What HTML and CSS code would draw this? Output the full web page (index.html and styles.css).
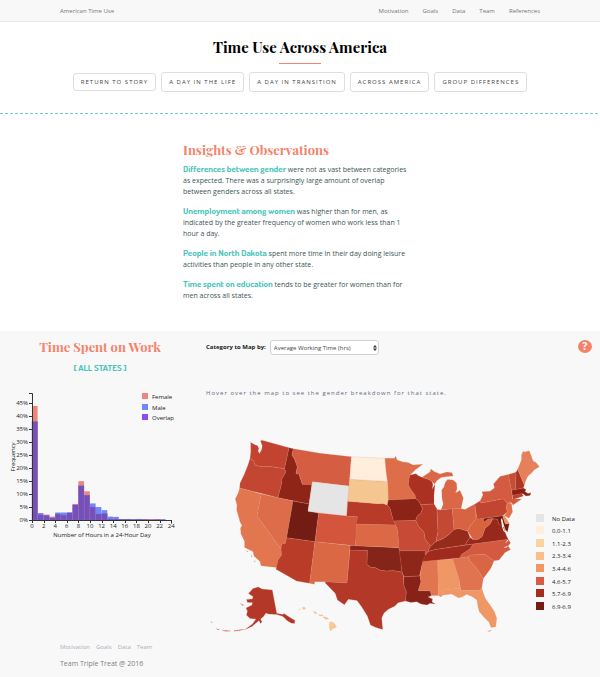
FILE: index.html
```html
<!DOCTYPE html>
<html lang="en">
<head>
<meta charset="utf-8">
<title>American Time Use</title>
<link rel="stylesheet" href="styles.css">
</head>
<body>
<header class="topbar">
  <a class="brand" href="#">American Time Use</a>
  <nav class="topnav">
    <a href="#">Motivation</a><a href="#">Goals</a><a href="#">Data</a><a href="#">Team</a><a href="#">References</a>
  </nav>
</header>

<section class="hero">
  <h1>Time Use Across America</h1>
  <div class="rule"></div>
  <nav class="tabs">
    <a class="tab tab-back" href="#">Return to story</a>
    <a class="tab" href="#">A day in the life</a>
    <a class="tab" href="#">A day in transition</a>
    <a class="tab" href="#">Across America</a>
    <a class="tab" href="#">Group differences</a>
  </nav>
</section>
<div class="dashes"></div>

<section class="insights">
  <h2>Insights &amp; Observations</h2>
  <p><strong>Differences between gender</strong> were not as vast between categories as expected. There was a surprisingly large amount of overlap between genders across all states.</p>
  <p><strong>Unemployment among women</strong> was higher than for men, as indicated by the greater frequency of women who work less than 1 hour a day.</p>
  <p><strong>People in North Dakota</strong> spent more time in their day doing leisure activities than people in any other state.</p>
  <p><strong>Time spent on education</strong> tends to be greater for women than for men across all states.</p>
</section>

<main class="explore">
  <section class="histogram">
    <h2>Time Spent on Work</h2>
    <h3>[ ALL STATES ]</h3>
    <svg class="hist" viewBox="0 380 200 165" role="img" aria-label="Hours of work by gender">
      <g id="bars"></g>
      <g id="axes"></g>
      <text x="102" y="537" text-anchor="middle">Number of Hours in a 24-Hour Day</text>
      <text transform="translate(15 457) rotate(-90)" text-anchor="middle">Frequency</text>
      <rect x="142" y="393" width="6" height="6" fill="#f0857c"/><text x="152" y="399">Female</text>
      <rect x="142" y="404" width="6" height="6" fill="#7088fb"/><text x="152" y="410">Male</text>
      <rect x="142" y="414" width="6" height="6" fill="#8c4df0"/><text x="152" y="420">Overlap</text>
    </svg>
  </section>

  <section class="mapping">
    <div class="controls">
      <label for="category">Category to Map by:</label>
      <div class="picker">
        <select id="category"><option>Average Working Time (hrs)</option></select>
        <svg class="arrows" viewBox="0 0 4 6" aria-hidden="true"><path d="M0 2.5 2 0l2 2.5zM0 3.5h4L2 6z" fill="#333"/></svg>
      </div>
      <button class="help" type="button" aria-label="Help">?</button>
    </div>
    <p class="hint">Hover over the map to see the gender breakdown for that state.</p>
    <svg class="map" viewBox="200 430 400 208" role="img" aria-label="Average working time by state">
      <g class="states">
        <path fill="#c24430" d="M250.700 442.300 254.700 444.700 258 445.700 259.300 447 258 451 259.500 453.500 261.500 450 262.300 446 260.500 441 262 440.300 289 447.700 284.500 468.700 270 466.500 262 466.700 255 465.300 253.500 460.500 250 458.500 250.800 452z"/>
        <path fill="#c24631" d="M250 458.500 253.500 460.500 255 465.300 262 466.700 270 466.500 284.500 468.700 286 471.700 281.300 480 282 482 278 497.700 239.700 488 240 483.300 244 475 248 465z"/>
        <path fill="#8e2517" d="M289 447.700 293.300 448.700 292 455 294.500 459 297.300 466.500 296 474 299 474 302.300 484.300 311.800 484.300 309 504 278 497.700 282 482 281.300 480 286 471.700 284.500 468.700z"/>
        <path fill="#d55d42" d="M293.300 448.700 320 453.300 351.300 456.700 349 486 312.500 481.700 311.800 484.300 302.300 484.300 299 474 296 474 297.300 466.500 294.500 459 292 455z"/>
        <path fill="#e2764e" d="M239.700 488 261.300 494 257 515.700 281 549 281.500 555 278 560 276.700 567.500 261 565.700 260 561.500 254 556 253 551.500 244.700 547.500 244.500 541 241 534 240.500 528 242 525.500 240 522 239 518 236.700 510 237 505 235.300 499 238.300 493z"/>
        <path fill="#dd6d4a" d="M261.300 494 293 501 286.600 537.800 285 544 282 543 281 549 257 515.700z"/>
        <path fill="#731c13" d="M293 501 309 504 308 511.300 318.700 513 315 541.700 286.600 537.800z"/>
        <path fill="#e5e5e5" d="M312.500 481.700 349 486 346.700 516 308 511.300z"/>
        <path fill="#d2553c" d="M318.700 513 346.700 516 357.500 516.700 355.500 545.700 315 541.700z"/>
        <path fill="#b93c28" d="M286.600 537.800 315 541.700 309.600 583.300 296.600 581 276 569.300 278 560 281.500 555 281 549 282 543 285 544z"/>
        <path fill="#da6845" d="M315 541.700 350.200 545.600 347 583 325.300 581.700 314.600 581.700 314.400 584.300 309.600 583.300z"/>
        <path fill="#b43827" d="M350 550 367.400 550.300 367 564.300 371 567.500 375 567.500 380 570 386.500 571 393 570.500 402 572 403.700 576.700 403.700 585 406.400 591.700 405.500 601 398 602.700 395 606 388.400 609.300 384 613 381.700 618 382.700 629.500 376 627.500 370.500 625 367.400 616 361.600 606.700 357 600.500 348.300 599.300 344.400 604.800 337.500 600 335.200 593.300 325.300 583 325.300 581.700 347 583z"/>
        <path fill="#852419" d="M350.200 545.600 399.200 547.700 400.800 560 402 572 393 570.500 386.500 571 380 570 375 567.500 371 567.500 367 564.300 367.400 550.300 350 550z"/>
        <path fill="#dc6846" d="M356.300 524 395.700 525 397.500 530 399.200 547.500 355.500 545.700z"/>
        <path fill="#b83a29" d="M347.700 501.300 378 503.700 383 503.500 387.300 505 390 508.300 392.700 518.300 395.700 525 356.300 524 357.500 516.700 346.700 516z"/>
        <path fill="#f6c691" d="M350 479.300 387.300 481.500 388 485 388.300 500 387.300 505 383 503.500 378 503.700 347.700 501.300z"/>
        <path fill="#feeedb" d="M351.300 456.700 385 458.300 386 470 387.300 481.500 350 479.300z"/>
        <path fill="#de6d4a" d="M385 458.300 394.700 458.300 395.700 456 397 460 403 462 408 462.500 413 465 422.700 464.300 415 470 410 475 409 479 408.300 485 410.500 489 415 495 415.700 498.700 388.300 500 388 485 386 470z"/>
        <path fill="#ab3222" d="M410 475 416 473.700 418.300 475.700 422 477.300 429 479.500 432 481.500 433 485 432 489 435 484.500 434 495 434 504 420.700 504.700 418.300 500.500 415.700 498.700 415 495 410.500 489 408.300 485 409 479z"/>
        <path fill="#8c2317" d="M388.300 500 415.700 498.700 418.300 500.500 420.700 504.700 422.500 508.500 421 513 417.300 516 415.700 520.500 393.500 521 390 508.300 387.300 505z"/>
        <path fill="#c64a35" d="M393.500 521 415.700 520.500 418.300 526 424 532 425 539 430.500 546 428 551.500 425 555 425 550.700 399.300 550.700 397.500 530 395.700 525z"/>
        <path fill="#8f261a" d="M399.300 550.700 425 550.700 425 555 427 553 425 559 422 565 419.500 576 404 576.700 402 572z"/>
        <path fill="#862217" d="M404 576.700 420 576 421 582 418.300 590.700 430.300 590.700 431.500 595.500 428 597 432.500 599 432 602 435.300 604 430 603.300 427 605 421 604 416.700 601.700 411 602.500 405.500 601 406.400 591.700 403.700 585z"/>
        <path fill="#e07550" d="M422.700 561.300 437.700 560 438.300 595.500 431.500 595.500 430.300 590.700 418.300 590.700 421 582 420 576 422 565z"/>
        <path fill="#ef9765" d="M437.700 560 452.700 559 459.300 580 460 588.300 442.300 590 443 595 441 597 438.300 595.500z"/>
        <path fill="#e07450" d="M452.700 559 468 556.700 470 561 476.700 568.300 483.300 578.500 481.700 588.300 479 590.500 460.700 590.300 459.300 580z"/>
        <path fill="#ef9866" d="M442.300 590 460 588.300 460.700 590.300 479 590.500 481.700 588.300 485 598 490 605 494.500 611.700 496.700 618.300 495.700 626.700 491 627.500 489 622 485 618.300 479.500 612 478 607 477 600 472 596.500 466.700 594.300 462 597 458.300 597.700 451.700 594 443 595z"/>
        <path fill="#da6544" d="M468 556.700 471 555 485 554.300 494 560.700 491 568 483.300 578.500 476.700 568.300 470 561z"/>
        <path fill="#d35a40" d="M473 544 508.300 539.300 510.500 543 508 546 510.500 549.500 505 552.500 499 560 494 560.700 485 554.300 471 555 468 556.700 459.500 558 462 554 470 549z"/>
        <path fill="#a02b1c" d="M428 551.500 435 549.500 473 544 470 549 462 554 459.500 558 422.700 561.500 425 556z"/>
        <path fill="#962a1b" d="M436 541.500 442 539 444 538 449 534.500 454 529.500 459 528.500 467.500 531 470 537.300 465 545 435 549.500 428 551.500 430.500 546z"/>
        <path fill="#97281b" d="M465 545 470 537.300 473 539.500 478 539.300 482 536.700 485 528.300 490 524 493 518.500 497.500 519.500 499 524 504 527.500 505 532 507 537 508.300 539.300 473 544z"/>
        <path fill="#d9623f" d="M475.500 510 477.300 519.300 483.300 518.300 484 522 488 519 493 518.500 490 524 485 528.300 482 536.700 478 539.300 473 539.500 467.500 531 470 526 475 520z"/>
        <path fill="#b63a28" d="M420.700 504.700 434 504 437 509 438 531.700 436 541.500 430.500 546 425 539 424 532 418.300 526 415.700 520.500 417.300 516 421 513 422.500 508.500z"/>
        <path fill="#c44934" d="M437 509.500 441 510 452.300 508.700 454 529.500 449 534.500 444 538 436 541.500 438 531.700z"/>
        <path fill="#d86343" d="M452.300 508.700 461 508.700 465 509.500 475 504 475.500 515 475 520 470 526 467.500 531 459 528.500 454 529.500z"/>
        <path fill="#da6746" d="M441 510 443.300 504 442 498 441.700 490 444 487 445 483 447.500 479.500 453 480 456.500 483 457 488.500 455.500 493 460 490.500 463.300 498 461 508.700 452.300 508.700zM422 477.300 430 472 431 469 434 471.500 440 474 447 472 452 472.700 453 476 447 476.500 441 477.500 437 480.500 434.500 484 432 481.500 429 479.500z"/>
        <path fill="#c24532" d="M475 504 480 501 481 503 503.300 498.700 507.300 503 506 508 507.500 512 502.700 515.700 477.300 519.300 475.500 510z"/>
        <path fill="#d45b40" d="M480 501 483 495 482 491.700 490 491.300 494.500 488 493.500 484 500 476.500 508.300 474.500 511.500 490 512.500 499 521.500 499 513 505 511.500 502.500 507.300 503 503.300 498.700 481 503z"/>
        <path fill="#c54e36" d="M508.300 474.500 516 472.300 515.500 489.500 511.500 490.300z"/>
        <path fill="#ae3425" d="M516 472.300 517.700 469.300 524.300 485 523.300 488 515.500 489.500z"/>
        <path fill="#e5805a" d="M517.700 469.300 521.500 460 521.500 455 523 451.500 525 452 529 450.700 531 455 533 461 536 462.500 539.300 466.700 534 470 532 472.500 528 476 526 480 524.300 485z"/>
        <path fill="#8c2014" d="M511.700 490.300 523.300 488 526 489.500 525 491.500 528 493.500 531 492.700 530 495.500 526 496 523 493.700 512.300 495.500z"/>
        <path fill="#ba3f2d" d="M512.300 495.500 521.500 493.500 523.500 496 513 499.500z"/>
        <path fill="#de7049" d="M507.300 503 511.500 503.500 512.500 512 509 518.300 504.500 515.500 507.500 512 506 508z"/>
        <path fill="#751b12" d="M483.300 518.500 502.700 515.700 505.300 524 509.300 523.500 507.500 532 505.500 530 503 523 502 518 501 520 502 526.500 499 524 497.500 519.500 493 518.500 488 519 484 522z"/>
        <path fill="#f0975a" d="M502.700 515.700 504.500 515.500 509.300 523.500 505.300 524z"/>
        <path fill="#b43827" d="M248.500 593.500 253 588.500 258.300 587 262 589 272.300 590 276.700 613.300 283 614.500 284 613.500 290 617.500 295 620.500 294.500 623.500 291 623 287 620.500 283 616.500 277 614.500 268.300 614 266 613 263.500 616.500 260.500 619 262 622 260.500 623.500 259 620.500 256 623 252 626.500 245 629.500 252.500 624 256 619 250 618.500 246.500 615 247.500 611 246 608 252 605 252.500 602.500 247.500 602.500 246.500 599.500 252.500 599 253 596.500zM240.500 603.500 243.500 605 243 605.700zM245 629.500 239 630.600 234 631.300 234 630.700 240 629.700zM231 631 226 631.300 222 630.700 226 630.500zM219 630 216 628.700 219 629.300zM211 621.500l1.500 1h-1z"/>
        <path fill="#f9ca92" d="M302 608l2-1 1.500 1.300-1.500 1.500zM299 609.500l1-.8v1.300zM313.500 611.500l2 .3 1.300 2-2-.4zM319 614.800l4 .3-.5.8-3.500-.3zM323 617l2.500 0 3 1.500-2.500 1zM329.500 622.500l2.500-.8 2.500 2 2 3.300-3.500 1.500-2.500 2.400-1-3.500z"/>
      </g>
      <path class="water" d="M501.500 519.500 503 524 502.500 527 504.500 532M258 445l1 3M508 540l-2 2.500M507.500 546.500l-3 1"/>
      <path fill="#ef9866" d="M487 631.500 492 629.500 490 631.500z"/>
      <path fill="#e2764e" d="M245 550.500l3 .5v.7zM251 555l1.500 2-1.500-.5zM254 560l2 2-1.500-.4z"/>
      <g class="legend">
        <rect x="536" y="514" width="8" height="8" fill="#e5e5e5"/><text x="552" y="521">No Data</text>
        <rect x="536" y="526" width="8" height="8" fill="#feeedb"/><text x="552" y="533">0.0-1.1</text>
        <rect x="536" y="539" width="8" height="8" fill="#fbd3a0"/><text x="552" y="546">1.1-2.3</text>
        <rect x="536" y="552" width="8" height="8" fill="#f9be8a"/><text x="552" y="558">2.3-3.4</text>
        <rect x="536" y="564" width="8" height="8" fill="#f29664"/><text x="552" y="571">3.4-4.6</text>
        <rect x="536" y="577" width="8" height="8" fill="#d85c43"/><text x="552" y="584">4.6-5.7</text>
        <rect x="536" y="589" width="8" height="8" fill="#a52d1e"/><text x="552" y="596">5.7-6.9</text>
        <rect x="536" y="602" width="8" height="8" fill="#751b12"/><text x="552" y="609">6.9-6.9</text>
      </g>
    </svg>
  </section>
</main>

<footer class="footer">
  <nav class="footnav"><a href="#">Motivation</a><a href="#">Goals</a><a href="#">Data</a><a href="#">Team</a></nav>
  <p>Team Triple Treat @ 2016</p>
</footer>
<script src="chart.js"></script>
</body>
</html>
```
FILE: styles.css
```css
* { box-sizing: border-box; }
body {
  margin: 0;
  background: #f8f8f8;
  color: #3d5555;
  font-family: "Open Sans", "Noto Sans", sans-serif;
  font-size: 7px;
  line-height: 10px;
}
a { color: inherit; text-decoration: none; }
h1, h2, h3, p { margin: 0; }
h1, h2 { font-family: "Playfair Display", "Liberation Serif", serif; font-weight: 700; }

.topbar {
  display: flex;
  justify-content: space-between;
  align-items: center;
  height: 22px;
  padding: 0 10%;
  background: #f8f8f8;
  border-bottom: 1px solid #e9e9e9;
  color: #777;
  font-size: 6px;
}
.topnav { display: flex; gap: 14px; }

.hero { background: #fff; padding-top: 15px; text-align: center; }
h1 { color: #000; font-size: 15px; line-height: 20px; }
.rule { width: 42px; height: 1px; margin: 6px auto 8px; background: #f4826a; }
.tabs { display: flex; justify-content: center; align-items: center; gap: 5px; padding-bottom: 21px; }
.tab {
  padding: 4px 7px;
  border: 1px solid #dedede;
  border-radius: 3px;
  color: #444;
  font-size: 6px;
  letter-spacing: 1px;
  text-transform: uppercase;
}
.tab-back { padding: 3px 7px; }
.dashes { height: 1px; background: repeating-linear-gradient(90deg, #6fcfc4 0 3px, #fff 3px 5px); }

.insights { background: #fff; padding: 27px 31% 21px 183px; }
.insights h2 { font-size: 13px; line-height: 18px; }
.insights p { margin: 5px 0 9px; line-height: 11px; }
.insights p + p { margin-top: 0; }
h2 { color: #f4826a; }
strong, h3 { color: #4ac5bb; font-family: Dosis, Lato, sans-serif; font-weight: 700; }
strong { font-size: 9px; line-height: 0; }

.explore { display: grid; grid-template-columns: 1fr 2fr; }
.histogram { text-align: center; padding-top: 7px; }
.histogram h2 { font-size: 13px; line-height: 18px; }
h3 { margin-top: 7px; font-size: 9px; line-height: 10px; }
.hist { display: block; width: 100%; margin-top: 7px; fill: #222; font-size: 6px; }
.hist .axis { fill: none; stroke: #333; }
.hist .overlap { fill: #7450b8; stroke: #8565cc; stroke-width: 0.4; }
.hist .female { fill: #ef857b; }
.hist .male { fill: #7088fb; }

.controls { display: flex; align-items: center; gap: 4px; padding: 7px 8px 0 6px; }
.controls label { color: #222; font-weight: 700; font-size: 6px; }
.picker { position: relative; width: 109px; }
.picker select {
  appearance: none;
  display: block;
  width: 100%;
  height: 15px;
  margin: 2px 0 0;
  padding: 0 3px;
  border: 1px solid #d2d2d2;
  border-radius: 3px;
  background: #fff;
  color: #444;
  font: inherit;
  font-size: 6px;
}
.arrows { position: absolute; right: 2px; top: 7px; width: 4px; height: 6px; }
.help {
  width: 14px;
  height: 13px;
  margin-left: auto;
  padding: 0;
  border: 0;
  border-radius: 50%;
  background: #f4826a;
  color: #fff;
  font: 700 10px/13px "Open Sans", sans-serif;
}
.hint { margin: 33px 6px 32px; color: #5f6c7d; font-size: 6px; letter-spacing: 1px; }
.map { display: block; width: 100%; }
.states { stroke: #e08a6a; stroke-width: 0.2; stroke-linejoin: round; }
.water { fill: none; stroke: #f8f8f8; }
.legend { fill: #222; font-size: 6px; }

.footer { padding: 4px 10% 8px; color: #808080; }
.footnav { display: flex; gap: 6px; color: #a8b0ba; font-size: 6px; }
.footer p { margin-top: 7px; }
```
FILE: chart.js
```js
// Share of women and men (percent) by hours spent, one pair per hour.
const hours = [
  [44, 38], [2, 2.7], [2.1, 1.8], [1.3, 0.8], [2.3, 2.9], [1.9, 2.9], [2.7, 3], [6.2, 5.8],
  [15, 13.2], [11.1, 9.6], [5, 6.4], [2.3, 5], [2.4, 3.8], [0.4, 1.3], [0.4, 1.2], [0.4, 0.3],
  [0.3, 0.4], [0.2, 0.2], [0.2, 0.4], [0.2, 0.2], [0.1, 0.1], [0.3, 0.1], [0.1, 0.1], [0, 0]
];
const left = 32, base = 520, step = 5.8, unit = 2.59;
const bar = (i, value, name) =>
  `<rect class="${name}" x="${left + i * step}" y="${base - value * unit}" width="${step - 0.2}" height="${value * unit}"/>`;
document.getElementById('bars').innerHTML = hours.map(([f, m], i) =>
  bar(i, Math.max(f, m), f > m ? 'female' : 'male') + bar(i, Math.min(f, m), 'overlap')).join('');

let axes = '<path class="axis" d="M29 393.500h3.500V520.500H171.500v3"/>';
for (let p = 0; p <= 45; p += 5) {
  const y = base - p * unit;
  axes += `<path class="axis" d="M29 ${Math.round(y) + 0.5}h3"/><text x="28" y="${y + 2}" text-anchor="end">${p}%</text>`;
}
for (let h = 0; h <= 24; h += 2) {
  const x = left + h * step;
  axes += `<path class="axis" d="M${Math.round(x) + 0.5} 520v3"/><text x="${x}" y="528" text-anchor="middle">${h}</text>`;
}
document.getElementById('axes').innerHTML = axes;
```
